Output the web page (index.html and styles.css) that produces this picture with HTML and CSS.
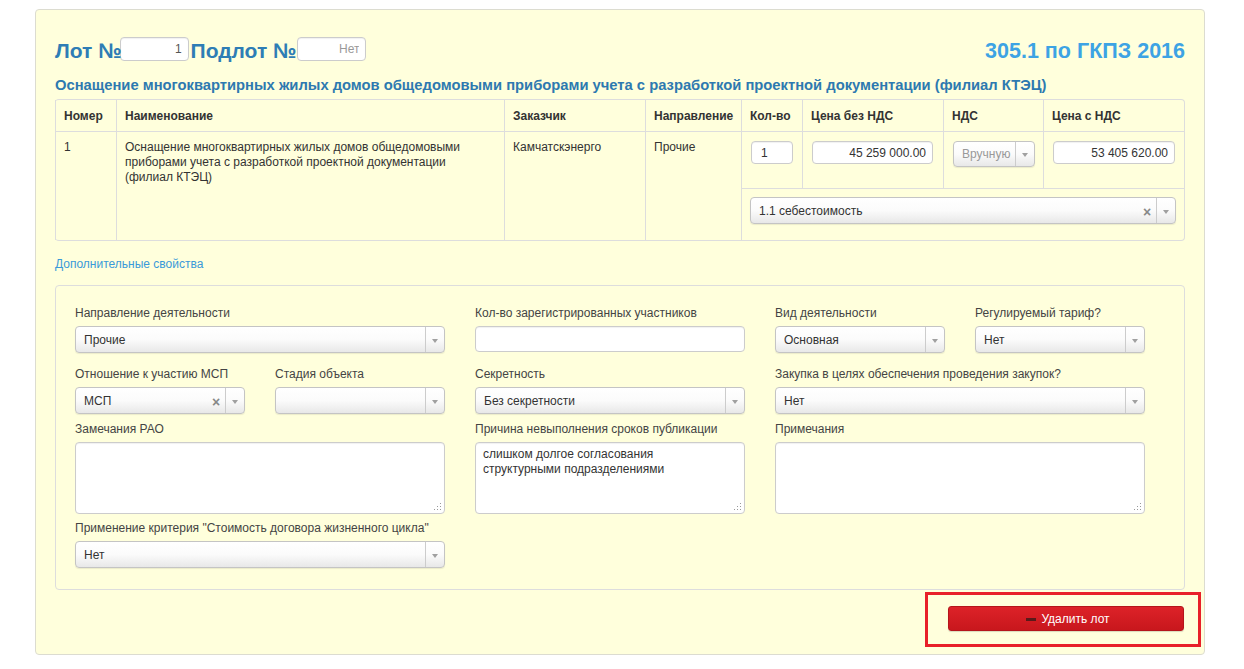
FILE: index.html
```html
<!DOCTYPE html>
<html lang="ru">
<head>
<meta charset="utf-8">
<title>Лот</title>
<link rel="stylesheet" href="styles.css">
</head>
<body>
<div class="page">
  <div class="head">
    <span class="lot-title">Лот №</span>
    <input class="head-input first-input" type="text" value="1">
    <span class="lot-title">Подлот №</span>
    <input class="head-input" type="text" placeholder="Нет">
    <span class="gkpz">305.1 по ГКПЗ 2016</span>
  </div>
  <div class="subtitle">Оснащение многоквартирных жилых домов общедомовыми приборами учета с разработкой проектной документации (филиал КТЭЦ)</div>

  <table class="lots">
    <colgroup>
      <col style="width:61px"><col style="width:388px"><col style="width:141px"><col style="width:96px">
      <col style="width:61px"><col style="width:141px"><col style="width:100px"><col style="width:141px">
    </colgroup>
    <thead>
      <tr>
        <th class="first">Номер</th>
        <th>Наименование</th>
        <th>Заказчик</th>
        <th>Направление</th>
        <th>Кол-во</th>
        <th>Цена без НДС</th>
        <th>НДС</th>
        <th>Цена с НДС</th>
      </tr>
    </thead>
    <tbody>
      <tr class="r1">
        <td class="first txt" rowspan="2">1</td>
        <td class="txt" rowspan="2">Оснащение многоквартирных жилых домов общедомовыми приборами учета с разработкой проектной документации (филиал КТЭЦ)</td>
        <td class="txt" rowspan="2">Камчатскэнерго</td>
        <td class="txt" rowspan="2">Прочие</td>
        <td class="ctl"><input class="inp qty" type="text" value="1"></td>
        <td class="ctl"><input class="inp num w121" type="text" value="45 259 000.00"></td>
        <td class="ctl">
          <div class="sel nds"><span class="sel-val muted">Вручную</span><span class="sel-arrow"></span></div>
        </td>
        <td class="ctl"><input class="inp num w122" type="text" value="53 405 620.00"></td>
      </tr>
      <tr class="r2">
        <td class="ctl2" colspan="4">
          <div class="sel"><span class="sel-val">1.1 себестоимость</span><span class="sel-x">×</span><span class="sel-arrow"></span></div>
        </td>
      </tr>
    </tbody>
  </table>

  <a class="more" href="#">Дополнительные свойства</a>

  <div class="props">
    <div class="grid row1">
      <div class="field s4">
        <div class="lbl">Направление деятельности</div>
        <div class="sel"><span class="sel-val">Прочие</span><span class="sel-arrow"></span></div>
      </div>
      <div class="field s3">
        <div class="lbl">Кол-во зарегистрированных участников</div>
        <input class="inp full" type="text">
      </div>
      <div class="field s2">
        <div class="lbl">Вид деятельности</div>
        <div class="sel"><span class="sel-val">Основная</span><span class="sel-arrow"></span></div>
      </div>
      <div class="field s2">
        <div class="lbl">Регулируемый тариф?</div>
        <div class="sel"><span class="sel-val">Нет</span><span class="sel-arrow"></span></div>
      </div>
    </div>

    <div class="grid row2">
      <div class="field s2">
        <div class="lbl">Отношение к участию МСП</div>
        <div class="sel"><span class="sel-val">МСП</span><span class="sel-x">×</span><span class="sel-arrow"></span></div>
      </div>
      <div class="field s2">
        <div class="lbl">Стадия объекта</div>
        <div class="sel"><span class="sel-val"></span><span class="sel-arrow"></span></div>
      </div>
      <div class="field s3">
        <div class="lbl">Секретность</div>
        <div class="sel"><span class="sel-val">Без секретности</span><span class="sel-arrow"></span></div>
      </div>
      <div class="field s4">
        <div class="lbl">Закупка в целях обеспечения проведения закупок?</div>
        <div class="sel"><span class="sel-val">Нет</span><span class="sel-arrow"></span></div>
      </div>
    </div>

    <div class="grid row3">
      <div class="field s4">
        <div class="lbl">Замечания РАО</div>
        <div class="ta-wrap"><textarea class="ta"></textarea></div>
      </div>
      <div class="field s3">
        <div class="lbl">Причина невыполнения сроков публикации</div>
        <div class="ta-wrap"><textarea class="ta">слишком долгое согласования
структурными подразделениями</textarea></div>
      </div>
      <div class="field s4">
        <div class="lbl">Примечания</div>
        <div class="ta-wrap"><textarea class="ta"></textarea></div>
      </div>
    </div>

    <div class="grid row4">
      <div class="field s4">
        <div class="lbl">Применение критерия "Стоимость договора жизненного цикла"</div>
        <div class="sel"><span class="sel-val">Нет</span><span class="sel-arrow"></span></div>
      </div>
    </div>
  </div>

  <div class="actions">
    <div class="highlight">
      <button class="btn-del" type="button"><span class="minus"></span>Удалить лот</button>
    </div>
  </div>
</div>
</body>
</html>
```

FILE: styles.css
```css
html, body {
  margin: 0;
  padding: 0;
  background: #ffffff;
  font-family: "Liberation Sans", Arial, sans-serif;
  font-size: 12px;
  color: #333333;
}

.page {
  margin: 9px 0 0 35px;
  width: 1170px;
  height: 646px;
  box-sizing: border-box;
  border: 1px solid #dcdcd0;
  border-radius: 4px;
  background: #ffffdc;
  padding: 27px 19px 0 19px;
}

.head {
  display: flex;
  align-items: center;
  height: 24px;
}

.lot-title {
  font-size: 21px;
  font-weight: bold;
  color: #2e7db5;
  line-height: 24px;
  position: relative;
  top: 2px;
}

.head-input {
  width: 69px;
  height: 24px;
  box-sizing: border-box;
  margin: 0 2px 0 1px;
  border: 1px solid #cccccc;
  border-radius: 4px;
  background: #ffffff;
  font-family: "Liberation Sans", Arial, sans-serif;
  font-size: 12px;
  color: #555555;
  text-align: right;
  padding: 0 6px;
  box-shadow: inset 0 1px 1px rgba(0,0,0,0.06);
  outline: none;
}

.head-input.first-input {
  margin-left: -2px;
}

.head-input::placeholder {
  color: #999999;
}

.gkpz {
  margin-left: auto;
  font-size: 21.5px;
  font-weight: bold;
  color: #3da3e4;
  line-height: 24px;
  position: relative;
  top: 2px;
}

.subtitle {
  margin-top: 15px;
  font-size: 14.75px;
  line-height: 18px;
  font-weight: bold;
  color: #2d79b0;
}

.lots {
  margin-top: 5px;
  width: 1130px;
  table-layout: fixed;
  border-collapse: separate;
  border-spacing: 0;
  border: 1px solid #dddddd;
  border-left: none;
  border-radius: 4px;
}

.lots th,
.lots td {
  border-left: 1px solid #dddddd;
  vertical-align: top;
  text-align: left;
  padding: 0;
}

.lots th {
  height: 31px;
  padding: 0 8px;
  vertical-align: middle;
  font-weight: bold;
  color: #333333;
}

.lots td {
  border-top: 1px solid #dddddd;
}

.lots td.txt {
  padding: 8px 8px 0 8px;
  line-height: 15px;
}

.lots tr.r1 td.ctl {
  height: 57px;
  padding: 9px 9px 0 9px;
  box-sizing: border-box;
}

.lots tr.r2 td.ctl2 {
  height: 52px;
  padding: 8px 8px 0 8px;
  box-sizing: border-box;
}

.inp {
  height: 23px;
  box-sizing: border-box;
  border: 1px solid #cccccc;
  border-radius: 4px;
  background: #ffffff;
  font-family: "Liberation Sans", Arial, sans-serif;
  font-size: 12px;
  color: #333333;
  padding: 0 6px;
  box-shadow: inset 0 1px 1px rgba(0,0,0,0.06);
  outline: none;
  display: block;
}

.qty { width: 42px; padding-left: 9px; }
.num { text-align: right; }
.w121 { width: 121px; }
.w122 { width: 122px; }
.full { width: 100%; height: 26px; }

.sel {
  display: flex;
  align-items: center;
  height: 27px;
  box-sizing: border-box;
  border: 1px solid #c4c4c4;
  border-radius: 4px;
  background: linear-gradient(#ffffff 0%, #fbfbfb 50%, #e8e8e8 100%);
  box-shadow: 0 1px 1px rgba(0,0,0,0.08);
}

.sel.nds {
  width: 82px;
  height: 26px;
}

.sel-val {
  flex: 1;
  padding-left: 8px;
  color: #333333;
  white-space: nowrap;
  overflow: hidden;
}

.sel-val.muted {
  color: #999999;
}

.sel-x {
  width: 18px;
  text-align: center;
  color: #888888;
  font-weight: bold;
  font-size: 14px;
  line-height: 14px;
  margin-top: 3px;
}

.sel-arrow {
  width: 18px;
  height: 100%;
  border-left: 1px solid #cccccc;
  position: relative;
}

.sel-arrow::after {
  content: "";
  position: absolute;
  left: 6px;
  top: 50%;
  margin-top: -1px;
  border-left: 3px solid transparent;
  border-right: 3px solid transparent;
  border-top: 4px solid #a0a0a0;
}

.more {
  display: block;
  margin-top: 16px;
  line-height: 14px;
  color: #3a9ad9;
  text-decoration: none;
  font-size: 12px;
}

.props {
  margin-top: 14px;
  width: 1130px;
  height: 305px;
  box-sizing: border-box;
  border: 1px solid #dddddd;
  border-radius: 4px;
  padding: 19px 19px 0 19px;
}

.grid {
  display: grid;
  grid-template-columns: repeat(11, 70px);
  column-gap: 30px;
}

.row1 { margin-bottom: 13px; }
.row2 { margin-bottom: 7px; }
.row3 { margin-bottom: 6px; }

.s2 { grid-column: span 2; }
.s3 { grid-column: span 3; }
.s4 { grid-column: span 4; }

.lbl {
  line-height: 16px;
  margin-bottom: 5px;
  color: #444444;
  white-space: nowrap;
}

.ta-wrap {
  position: relative;
}

.ta-wrap::after {
  content: "";
  position: absolute;
  right: 4px;
  bottom: 4px;
  width: 1px;
  height: 1px;
  background: #9a9a9a;
  box-shadow: -3px 0 0 #9a9a9a, -6px 0 0 #9a9a9a, 0 -3px 0 #9a9a9a, -3px -3px 0 #9a9a9a, 0 -6px 0 #9a9a9a;
}

.ta {
  display: block;
  width: 100%;
  height: 72px;
  box-sizing: border-box;
  border: 1px solid #cccccc;
  border-radius: 4px;
  background: #ffffff;
  font-family: "Liberation Sans", Arial, sans-serif;
  font-size: 12px;
  line-height: 15px;
  color: #333333;
  padding: 4px 7px;
  box-shadow: inset 0 1px 1px rgba(0,0,0,0.06);
  margin: 0;
  outline: none;
  resize: none;
}

.actions {
  display: flex;
  justify-content: flex-end;
  margin-top: 2px;
}

.highlight {
  margin-right: -16px;
  width: 276px;
  height: 55px;
  box-sizing: border-box;
  border: 3px solid #e8202a;
  padding: 11px 13px 0 20px;
}

.btn-del {
  display: flex;
  align-items: center;
  justify-content: center;
  width: 236px;
  height: 25px;
  border: 1px solid #b5151b;
  border-radius: 3px;
  background: linear-gradient(#dd2228, #c8171d);
  color: #ffffff;
  font-family: "Liberation Sans", Arial, sans-serif;
  font-size: 12px;
  padding: 0 0 0 4px;
  box-shadow: 0 1px 1px rgba(0,0,0,0.15);
}

.minus {
  display: inline-block;
  width: 10px;
  height: 3px;
  background: #5a1a1a;
  margin-right: 5px;
  margin-top: 2px;
}
```
